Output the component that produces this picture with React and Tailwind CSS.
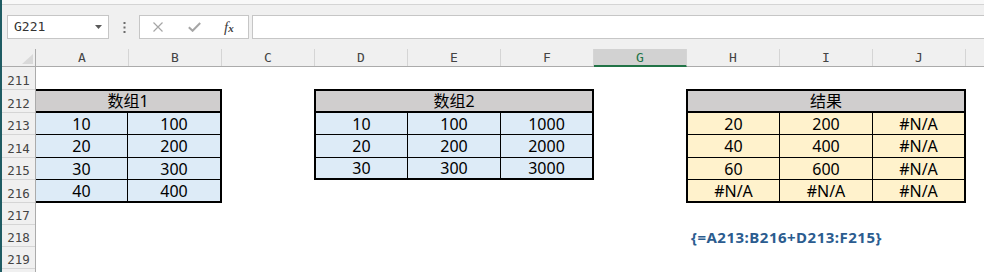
import React from 'react';

const cols = ['A', 'B', 'C', 'D', 'E', 'F', 'G', 'H', 'I', 'J'];
const rows = [
  { n: '211', h: 'h-[23px]' },
  { n: '212', h: 'h-[23px]' },
  { n: '213', h: 'h-[22px]' },
  { n: '214', h: 'h-[23px]' },
  { n: '215', h: 'h-[22px]' },
  { n: '216', h: 'h-[23px]' },
  { n: '217', h: 'h-[22px]' },
  { n: '218', h: 'h-[22px]' },
  { n: '219', h: 'h-[22px]' },
  { n: '', h: 'h-[22px]' },
];

const cellFont = { fontFamily: '"Noto Sans", "Noto Sans CJK SC", sans-serif' };
const monoFont = { fontFamily: '"DejaVu Sans Mono", monospace' };

function DataRow({ values, h, last, bg, widths }) {
  return (
    <div className={`flex min-h-0 ${last ? 'flex-1' : `${h} border-b border-black`} ${bg}`}>
      {values.map((v, i) => (
        <div
          key={i}
          className={`flex items-center justify-center text-[16px] leading-none text-black ${
            i < values.length - 1 ? `${widths[i]} border-r border-black` : 'flex-1'
          }`}
        >
          {v}
        </div>
      ))}
    </div>
  );
}

function Block({ title, data, bg, widths, heights, className }) {
  return (
    <div className={`flex flex-col border-black ${className}`} style={cellFont}>
      <div className="flex h-[22px] items-center justify-center border-b-2 border-black bg-[#d0cece] text-[16px] leading-none text-black">
        {title}
      </div>
      {data.map((r, i) => (
        <DataRow key={i} values={r} h={heights[i]} last={i === data.length - 1} bg={bg} widths={widths} />
      ))}
    </div>
  );
}

export default function App() {
  return (
    <div className="h-[272px] w-[984px] overflow-hidden border-l-2 border-[#1f5c63] bg-[#f0f0f0]">
      {/* ribbon edge */}
      <div className="h-[5px] border-b border-[#d4d4d4] bg-[#f8f8f8]" />

      {/* formula bar */}
      <div className="flex h-[44px] items-start pt-[10px]">
        <div
          className="ml-[5px] flex h-[24px] w-[102px] items-center justify-between border border-[#c6c6c6] bg-white pl-[6px] pr-[6px] text-[13px] text-[#333]"
          style={monoFont}
        >
          <span>G221</span>
          <svg width="7" height="4" viewBox="0 0 7 4">
            <path d="M0 0h7L3.5 4z" fill="#595959" />
          </svg>
        </div>
        <div className="flex h-[24px] w-[30px] items-center justify-center">
          <svg width="3" height="11" viewBox="0 0 3 11">
            <rect x="0.5" y="0" width="2" height="2" fill="#6b6b6b" />
            <rect x="0.5" y="4.5" width="2" height="2" fill="#6b6b6b" />
            <rect x="0.5" y="9" width="2" height="2" fill="#6b6b6b" />
          </svg>
        </div>
        <div className="flex h-[24px] w-[110px] items-center border border-[#c6c6c6] bg-white">
          <svg className="ml-[13px]" width="10" height="10" viewBox="0 0 10 10">
            <path d="M0.5 0.5l9 9M9.5 0.5l-9 9" stroke="#a6a6a6" strokeWidth="1.2" />
          </svg>
          <svg className="ml-[25px]" width="13" height="10" viewBox="0 0 13 10">
            <path d="M0.8 5.2l3.8 3.6L12.2 1" stroke="#a6a6a6" strokeWidth="2" fill="none" />
          </svg>
          <span
            className="ml-[23px] text-[15px] italic leading-none text-[#404040]"
            style={{ fontFamily: '"Liberation Serif", serif' }}
          >
            f<span className="text-[11px] font-bold">x</span>
          </span>
        </div>
        <div className="ml-[3px] h-[24px] flex-1 border-y border-l border-[#c6c6c6] bg-white" />
      </div>

      {/* column headers */}
      <div className="flex h-[18px] border-b border-[#ababab]" style={monoFont}>
        <div className="flex w-[34px] items-end justify-end border-r border-[#ababab] pb-[2px] pr-[2px]">
          <svg width="11" height="10" viewBox="0 0 11 10">
            <path d="M11 0V10H0z" fill="#d9d9d9" />
          </svg>
        </div>
        {cols.map((c) =>
          c === 'G' ? (
            <div
              key={c}
              className="-mb-px flex w-[93px] items-end justify-center border-b-2 border-r border-b-[#217346] border-r-[#d5d5d5] bg-[#d2d2d2] pb-px text-[13px] leading-none text-[#217346]"
            >
              {c}
            </div>
          ) : (
            <div
              key={c}
              className="flex w-[93px] items-end justify-center border-r border-[#d5d5d5] pb-[2px] text-[13px] leading-none text-[#444]"
            >
              {c}
            </div>
          )
        )}
        <div className="flex-1" />
      </div>

      {/* body */}
      <div className="flex">
        <div className="flex w-[34px] flex-col border-r border-[#ababab]" style={monoFont}>
          {rows.map((r, i) => (
            <div
              key={i}
              className={`${r.h} flex items-end justify-center border-b border-[#d5d5d5] pb-[2px] text-[12.5px] leading-none text-[#444]`}
            >
              {r.n}
            </div>
          ))}
        </div>

        <div className="grid flex-1 grid-cols-[repeat(10,93px)_1fr] grid-rows-[23px_23px_22px_23px_22px_23px_22px_22px_22px_22px] bg-white">
          <Block
            className="col-span-2 col-start-1 row-span-5 row-start-2 -mt-px border-y-2 border-r-2"
            title="数组1"
            bg="bg-[#ddebf7]"
            widths={['w-[92px]']}
            heights={['h-[22px]', 'h-[23px]', 'h-[22px]', 'h-[23px]']}
            data={[
              ['10', '100'],
              ['20', '200'],
              ['30', '300'],
              ['40', '400'],
            ]}
          />
          <Block
            className="col-span-3 col-start-4 row-span-4 row-start-2 -ml-px -mt-px border-2"
            title="数组2"
            bg="bg-[#ddebf7]"
            widths={['w-[92px]', 'w-[93px]']}
            heights={['h-[22px]', 'h-[23px]', 'h-[22px]']}
            data={[
              ['10', '100', '1000'],
              ['20', '200', '2000'],
              ['30', '300', '3000'],
            ]}
          />
          <Block
            className="col-span-3 col-start-8 row-span-5 row-start-2 -ml-px -mt-px border-2"
            title="结果"
            bg="bg-[#fff2cc]"
            widths={['w-[92px]', 'w-[93px]']}
            heights={['h-[22px]', 'h-[23px]', 'h-[22px]', 'h-[23px]']}
            data={[
              ['20', '200', '#N/A'],
              ['40', '400', '#N/A'],
              ['60', '600', '#N/A'],
              ['#N/A', '#N/A', '#N/A'],
            ]}
          />
          <div
            className="col-span-4 col-start-8 row-start-8 flex items-center whitespace-nowrap pl-[4px] pt-[2px] text-[15px] font-bold tracking-[0.5px] text-[#2b5c8f]"
            style={cellFont}
          >
            {'{=A213:B216+D213:F215}'}
          </div>
        </div>
      </div>
    </div>
  );
}
